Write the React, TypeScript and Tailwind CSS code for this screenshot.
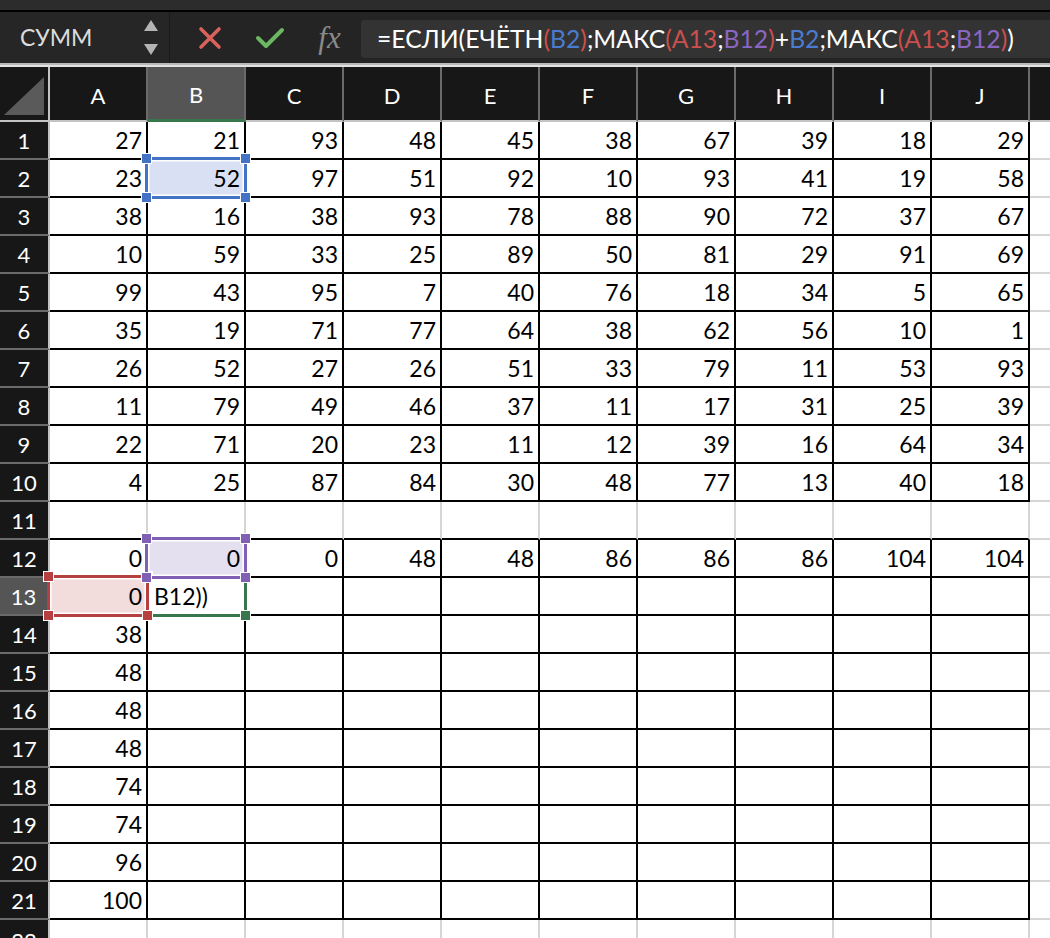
const cols = ['A', 'B', 'C', 'D', 'E', 'F', 'G', 'H', 'I', 'J'];

const data: (number | string | null)[][] = [
  [27, 21, 93, 48, 45, 38, 67, 39, 18, 29],
  [23, 52, 97, 51, 92, 10, 93, 41, 19, 58],
  [38, 16, 38, 93, 78, 88, 90, 72, 37, 67],
  [10, 59, 33, 25, 89, 50, 81, 29, 91, 69],
  [99, 43, 95, 7, 40, 76, 18, 34, 5, 65],
  [35, 19, 71, 77, 64, 38, 62, 56, 10, 1],
  [26, 52, 27, 26, 51, 33, 79, 11, 53, 93],
  [11, 79, 49, 46, 37, 11, 17, 31, 25, 39],
  [22, 71, 20, 23, 11, 12, 39, 16, 64, 34],
  [4, 25, 87, 84, 30, 48, 77, 13, 40, 18],
  [null, null, null, null, null, null, null, null, null, null],
  [0, 0, 0, 48, 48, 86, 86, 86, 104, 104],
  [0, 'B12))', null, null, null, null, null, null, null, null],
  [38, null, null, null, null, null, null, null, null, null],
  [48, null, null, null, null, null, null, null, null, null],
  [48, null, null, null, null, null, null, null, null, null],
  [48, null, null, null, null, null, null, null, null, null],
  [74, null, null, null, null, null, null, null, null, null],
  [74, null, null, null, null, null, null, null, null, null],
  [96, null, null, null, null, null, null, null, null, null],
  [100, null, null, null, null, null, null, null, null, null],
];

// cell fills for referenced ranges
const fills: Record<string, string> = {
  '2-1': 'bg-[#d9e0f3]',
  '12-1': 'bg-[#e5e0f0]',
  '13-0': 'bg-[#f3dcdc]',
};

const HEADER_H = 55;
const ROW_H = 38;
const COL_W = 98;
const ROWHEAD_W = 50;

type Sel = { col: number; row: number; color: string; corners: boolean[] };

// order matters: later ones are drawn on top
const selections: Sel[] = [
  { col: 1, row: 13, color: '#38764c', corners: [false, false, false, true] },
  { col: 0, row: 13, color: '#b5403f', corners: [true, true, true, true] },
  { col: 1, row: 2, color: '#4472c4', corners: [true, true, true, true] },
  { col: 1, row: 12, color: '#7f60b5', corners: [true, true, true, true] },
];

function Formula() {
  const red = 'text-[#c9504c]';
  const blue = 'text-[#4b7bd0]';
  const purple = 'text-[#8a66c2]';
  return (
    <span className="whitespace-nowrap text-[24.7px] text-white">
      =ЕСЛИ(ЕЧЁТН<span className={red}>(</span>
      <span className={blue}>B2</span>
      <span className={red}>)</span>;МАКС<span className={red}>(A13</span>;<span className={purple}>B12</span>
      <span className={red}>)</span>+<span className={blue}>B2</span>;МАКС<span className={red}>(A13</span>;
      <span className={purple}>B12</span>
      <span className={red}>)</span>)
    </span>
  );
}

function SelectionBox({ sel }: { sel: Sel }) {
  const left = ROWHEAD_W + sel.col * COL_W - 3;
  const top = HEADER_H + (sel.row - 1) * ROW_H - 3;
  const w = COL_W + 4;
  const h = ROW_H + 4;
  const pts = [
    [left, top],
    [left + w, top],
    [left, top + h],
    [left + w, top + h],
  ];
  return (
    <>
      <div
        className="absolute pointer-events-none border-[3px] shadow-[inset_0_0_0_1.5px_#fff]"
        style={{ left, top, width: w, height: h, borderColor: sel.color }}
      />
      {pts.map(([x, y], i) =>
        sel.corners[i] ? (
          <div
            key={i}
            className="absolute w-[11px] h-[11px] border border-white"
            style={{ left: x - 5.5 + (i % 2 === 1 ? -1.5 : 1.5), top: y - 5.5 + (i > 1 ? -1.5 : 1.5), background: sel.color }}
          />
        ) : null
      )}
    </>
  );
}

export default function App() {
  return (
    <div className="w-[1050px] h-[938px] overflow-hidden bg-white font-['Lato','Noto_Sans',sans-serif]">
      {/* Top chrome */}
      <div className="h-[10px] bg-[#2c2c2c]" />
      <div className="h-[2px] bg-black" />

      {/* Formula bar */}
      <div className="h-[51px] flex bg-[#242424]">
        <div className="w-[170px] h-full flex items-center justify-between pl-[20px] pr-[10px] bg-[#262626] border-r border-[#1b1b1b]">
          <span className="text-[23px] text-[#dcdcdc]">СУММ</span>
          <svg width="16" height="36" viewBox="0 0 16 36">
            <polygon points="1,11 15,11 8,0" fill="#b4b4b4" />
            <polygon points="1,24 15,24 8,35" fill="#b4b4b4" />
          </svg>
        </div>
        <div className="ml-[28px] flex items-center">
          <svg width="24" height="24" viewBox="0 0 24 24">
            <path d="M3 3 L21 21 M21 3 L3 21" stroke="#d9625b" strokeWidth="3.6" strokeLinecap="round" />
          </svg>
        </div>
        <div className="ml-[33px] flex items-center">
          <svg width="30" height="24" viewBox="0 0 30 24">
            <polyline points="3,12 11,20 27,4" fill="none" stroke="#6cb862" strokeWidth="4" strokeLinecap="round" strokeLinejoin="round" />
          </svg>
        </div>
        <div className="ml-[29px] w-[31px] flex items-center justify-center">
          <span className="font-['Liberation_Serif',serif] italic text-[31px] text-[#8a8a8a] leading-none">fx</span>
        </div>
        <div className="ml-[16px] mt-[8px] h-[38px] flex-1 flex items-center pl-[16px] bg-[#333333] rounded-l-[3px]">
          <Formula />
        </div>
      </div>
      <div className="h-[2px] bg-[#b9b9b9]" />
      <div className="h-[2px] bg-[#e2e2e2]" />

      {/* Sheet */}
      <div className="relative">
        <div className="grid grid-cols-[50px_repeat(10,98px)_1fr]">
          {/* Column headers */}
          <div className="h-[55px] bg-[#171717] border-r-2 border-b-2 border-[#c4c4c4] flex items-end justify-end p-[4px] pb-[5px]">
            <svg width="40" height="38" viewBox="0 0 40 38">
              <polygon points="0,38 40,38 40,0" fill="#5a5a5a" />
            </svg>
          </div>
          {cols.map((c, i) => (
            <div
              key={c}
              className={
                i === 1
                  ? 'h-[55px] flex items-center justify-center bg-[#555555] border-r-2 border-r-[#6a6a6a] border-b-[3px] border-b-[#38764c] text-white text-[22px] pt-[3px]'
                  : 'h-[55px] flex items-center justify-center bg-[#171717] border-r-2 border-r-[#6a6a6a] border-b-2 border-b-[#c4c4c4] text-white text-[22px] pt-[3px]'
              }
            >
              {c}
            </div>
          ))}
          <div className="h-[55px] bg-[#171717] border-b-2 border-[#c4c4c4]" />

          {/* Rows */}
          {data.map((row, r) => {
            const rn = r + 1;
            const gapRow = rn === 11;
            return [
              <div
                key={`h${rn}`}
                className={
                  rn === 13
                    ? 'h-[38px] flex items-center justify-center bg-[#555555] border-r-[3px] border-r-[#38764c] border-b-2 border-b-[#6a6a6a] text-white text-[22px]'
                    : 'h-[38px] flex items-center justify-center bg-[#171717] border-r-2 border-r-[#c4c4c4] border-b-2 border-b-[#6a6a6a] text-white text-[22px]'
                }
              >
                {rn}
              </div>,
              ...row.map((v, c) => {
                const fill = fills[`${rn}-${c}`] ?? 'bg-white';
                const isText = typeof v === 'string';
                return (
                  <div
                    key={`${rn}-${c}`}
                    className={`h-[38px] flex items-center text-[23px] text-black border-b-2 border-b-black border-r-2 ${
                      gapRow ? 'border-r-[#d6d6d6]' : 'border-r-black'
                    } ${isText ? 'justify-start pl-[6px]' : 'justify-end pr-[4px]'} ${fill}`}
                  >
                    {v}
                  </div>
                );
              }),
              <div key={`k${rn}`} className="h-[38px] border-b-2 border-[#d6d6d6]" />,
            ];
          })}

          {/* Row 22 */}
          <div className="h-[38px] flex items-start justify-center bg-[#171717] border-r-2 border-[#c4c4c4] text-white text-[22px] pt-[4px]">
            22
          </div>
          {cols.map((c) => (
            <div key={`r22${c}`} className="h-[38px] border-r-2 border-[#d6d6d6]" />
          ))}
          <div className="h-[38px]" />
        </div>

        {selections.map((s, i) => (
          <SelectionBox key={i} sel={s} />
        ))}
      </div>
    </div>
  );
}
